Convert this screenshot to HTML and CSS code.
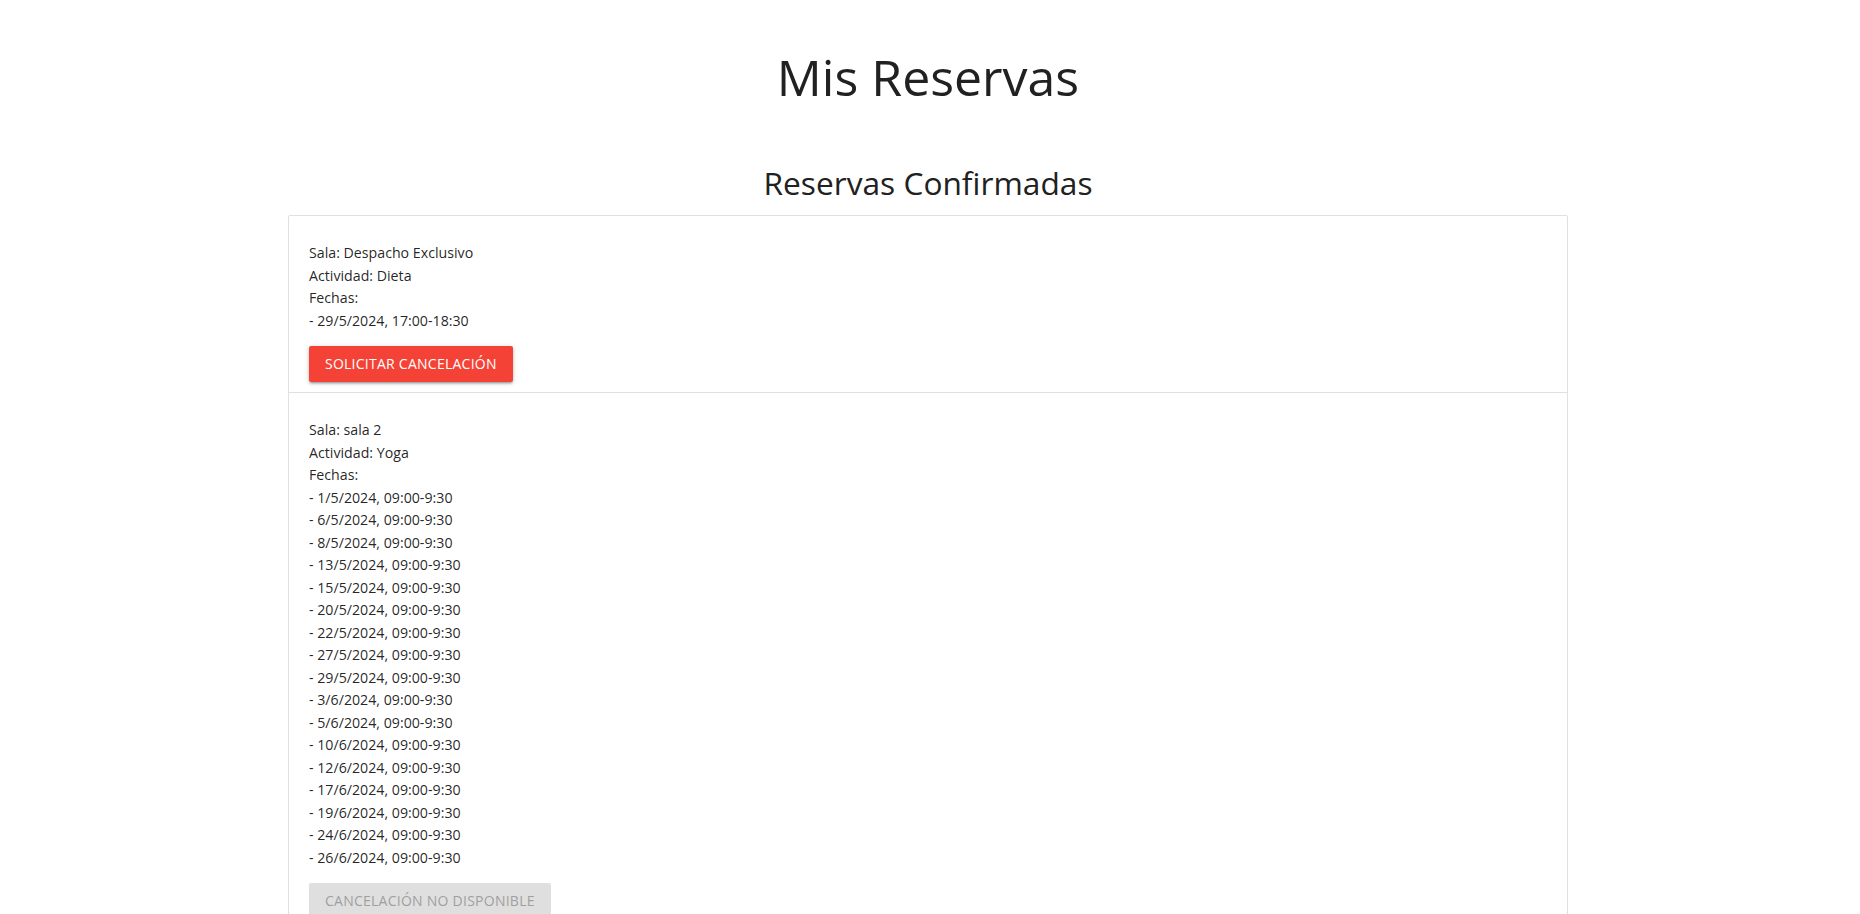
FILE: index.html
```html
<!DOCTYPE html>
<html lang="es">
<head>
<meta charset="utf-8">
<title>Mis Reservas</title>
<link rel="stylesheet" href="styles.css">
</head>
<body>
<div class="page">
  <main class="container">
    <h1 class="page-title">Mis Reservas</h1>
    <h4 class="section-title">Reservas Confirmadas</h4>
    <ul class="collection">
      <li class="collection-item">
        <div class="info">
          <div>Sala: Despacho Exclusivo</div>
          <div>Actividad: Dieta</div>
          <div>Fechas:</div>
          <div>- 29/5/2024, 17:00-18:30</div>
        </div>
        <button class="btn btn-red">Solicitar cancelación</button>
      </li>
      <li class="collection-item">
        <div class="info">
          <div>Sala: sala 2</div>
          <div>Actividad: Yoga</div>
          <div>Fechas:</div>
          <div>- 1/5/2024, 09:00-9:30</div>
          <div>- 6/5/2024, 09:00-9:30</div>
          <div>- 8/5/2024, 09:00-9:30</div>
          <div>- 13/5/2024, 09:00-9:30</div>
          <div>- 15/5/2024, 09:00-9:30</div>
          <div>- 20/5/2024, 09:00-9:30</div>
          <div>- 22/5/2024, 09:00-9:30</div>
          <div>- 27/5/2024, 09:00-9:30</div>
          <div>- 29/5/2024, 09:00-9:30</div>
          <div>- 3/6/2024, 09:00-9:30</div>
          <div>- 5/6/2024, 09:00-9:30</div>
          <div>- 10/6/2024, 09:00-9:30</div>
          <div>- 12/6/2024, 09:00-9:30</div>
          <div>- 17/6/2024, 09:00-9:30</div>
          <div>- 19/6/2024, 09:00-9:30</div>
          <div>- 24/6/2024, 09:00-9:30</div>
          <div>- 26/6/2024, 09:00-9:30</div>
        </div>
        <button class="btn btn-disabled" disabled>Cancelación no disponible</button>
      </li>
    </ul>
  </main>
</div>
</body>
</html>
```

FILE: styles.css
```css
* { box-sizing: border-box; }
html, body { margin: 0; padding: 0; background: #fff; }
body {
  font-family: "Open Sans", "Noto Sans", sans-serif;
  color: rgba(0, 0, 0, 0.87);
  font-size: 14.2px;
}
.page {
  padding-right: 4px;
}
.container {
  width: 1280px;
  margin: 0 auto;
}
.page-title {
  margin: 0;
  padding-top: 42px;
  height: 138px;
  text-align: center;
  font-weight: 400;
  font-size: 50px;
  line-height: 70px;
  color: #212121;
}
.section-title {
  margin: 0;
  height: 77px;
  padding-top: 23px;
  text-align: center;
  font-weight: 400;
  font-size: 31.7px;
  line-height: 44px;
  color: #212121;
}
.collection {
  list-style: none;
  margin: 0;
  padding: 0;
  border: 1px solid #e0e0e0;
  border-radius: 2px;
}
.collection-item {
  padding: 26px 20px 10px;
  border-bottom: 1px solid #e0e0e0;
  display: flex;
  flex-direction: column;
  align-items: flex-start;
  gap: 14px;
}
.info { line-height: 22.5px; }
.btn {
  height: 36px;
  line-height: 36px;
  padding: 0 16px;
  border: none;
  border-radius: 2px;
  font-family: inherit;
  font-size: 14px;
  letter-spacing: 0.25px;
  text-transform: uppercase;
}
.btn-red {
  background: #f44336;
  color: #fff;
  box-shadow: 0 2px 2px 0 rgba(0,0,0,0.14), 0 3px 1px -2px rgba(0,0,0,0.12), 0 1px 5px 0 rgba(0,0,0,0.2);
}
.btn-disabled {
  background: #dfdfdf;
  color: #9f9f9f;
}
```
